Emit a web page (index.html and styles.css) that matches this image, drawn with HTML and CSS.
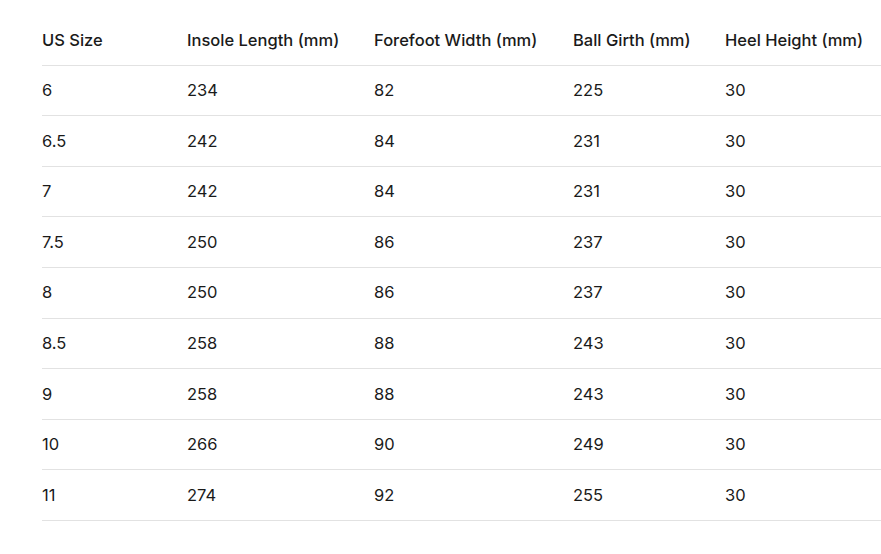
FILE: index.html
```html
<!DOCTYPE html>
<html>
<head>
<meta charset="utf-8">
<link rel="stylesheet" href="styles.css">
</head>
<body>
<div class="wrap">
<table class="sizes">
<colgroup>
<col class="c1"><col class="c2"><col class="c3"><col class="c4"><col class="c5">
</colgroup>
<thead>
<tr><th>US Size</th><th>Insole Length (mm)</th><th>Forefoot Width (mm)</th><th>Ball Girth (mm)</th><th>Heel Height (mm)</th></tr>
</thead>
<tbody>
<tr><td>6</td><td>234</td><td>82</td><td>225</td><td>30</td></tr>
<tr><td>6.5</td><td>242</td><td>84</td><td>231</td><td>30</td></tr>
<tr><td>7</td><td>242</td><td>84</td><td>231</td><td>30</td></tr>
<tr><td>7.5</td><td>250</td><td>86</td><td>237</td><td>30</td></tr>
<tr><td>8</td><td>250</td><td>86</td><td>237</td><td>30</td></tr>
<tr><td>8.5</td><td>258</td><td>88</td><td>243</td><td>30</td></tr>
<tr><td>9</td><td>258</td><td>88</td><td>243</td><td>30</td></tr>
<tr><td>10</td><td>266</td><td>90</td><td>249</td><td>30</td></tr>
<tr><td>11</td><td>274</td><td>92</td><td>255</td><td>30</td></tr>
</tbody>
</table>
</div>
</body>
</html>
```
FILE: styles.css
```css
html, body {
  margin: 0;
  padding: 0;
  background: #ffffff;
  overflow: hidden;
}
.wrap {
  padding: 15px 0 0 42px;
}
.sizes {
  border-collapse: collapse;
  table-layout: fixed;
  width: 850px;
  font-family: Inter, "Noto Sans", sans-serif;
  font-size: 16.5px;
  line-height: 24px;
  color: #1a1a1a;
}
.c1 { width: 145px; }
.c2 { width: 187px; }
.c3 { width: 199px; }
.c4 { width: 152px; }
.c5 { width: 167px; }
.sizes th,
.sizes td {
  text-align: left;
  padding: 12.5px 0 13.1px 0;
  border-bottom: 1px solid #e2e2e2;
  white-space: nowrap;
}
.sizes th {
  font-weight: 500;
}
.sizes td {
  font-weight: 400;
}
```
